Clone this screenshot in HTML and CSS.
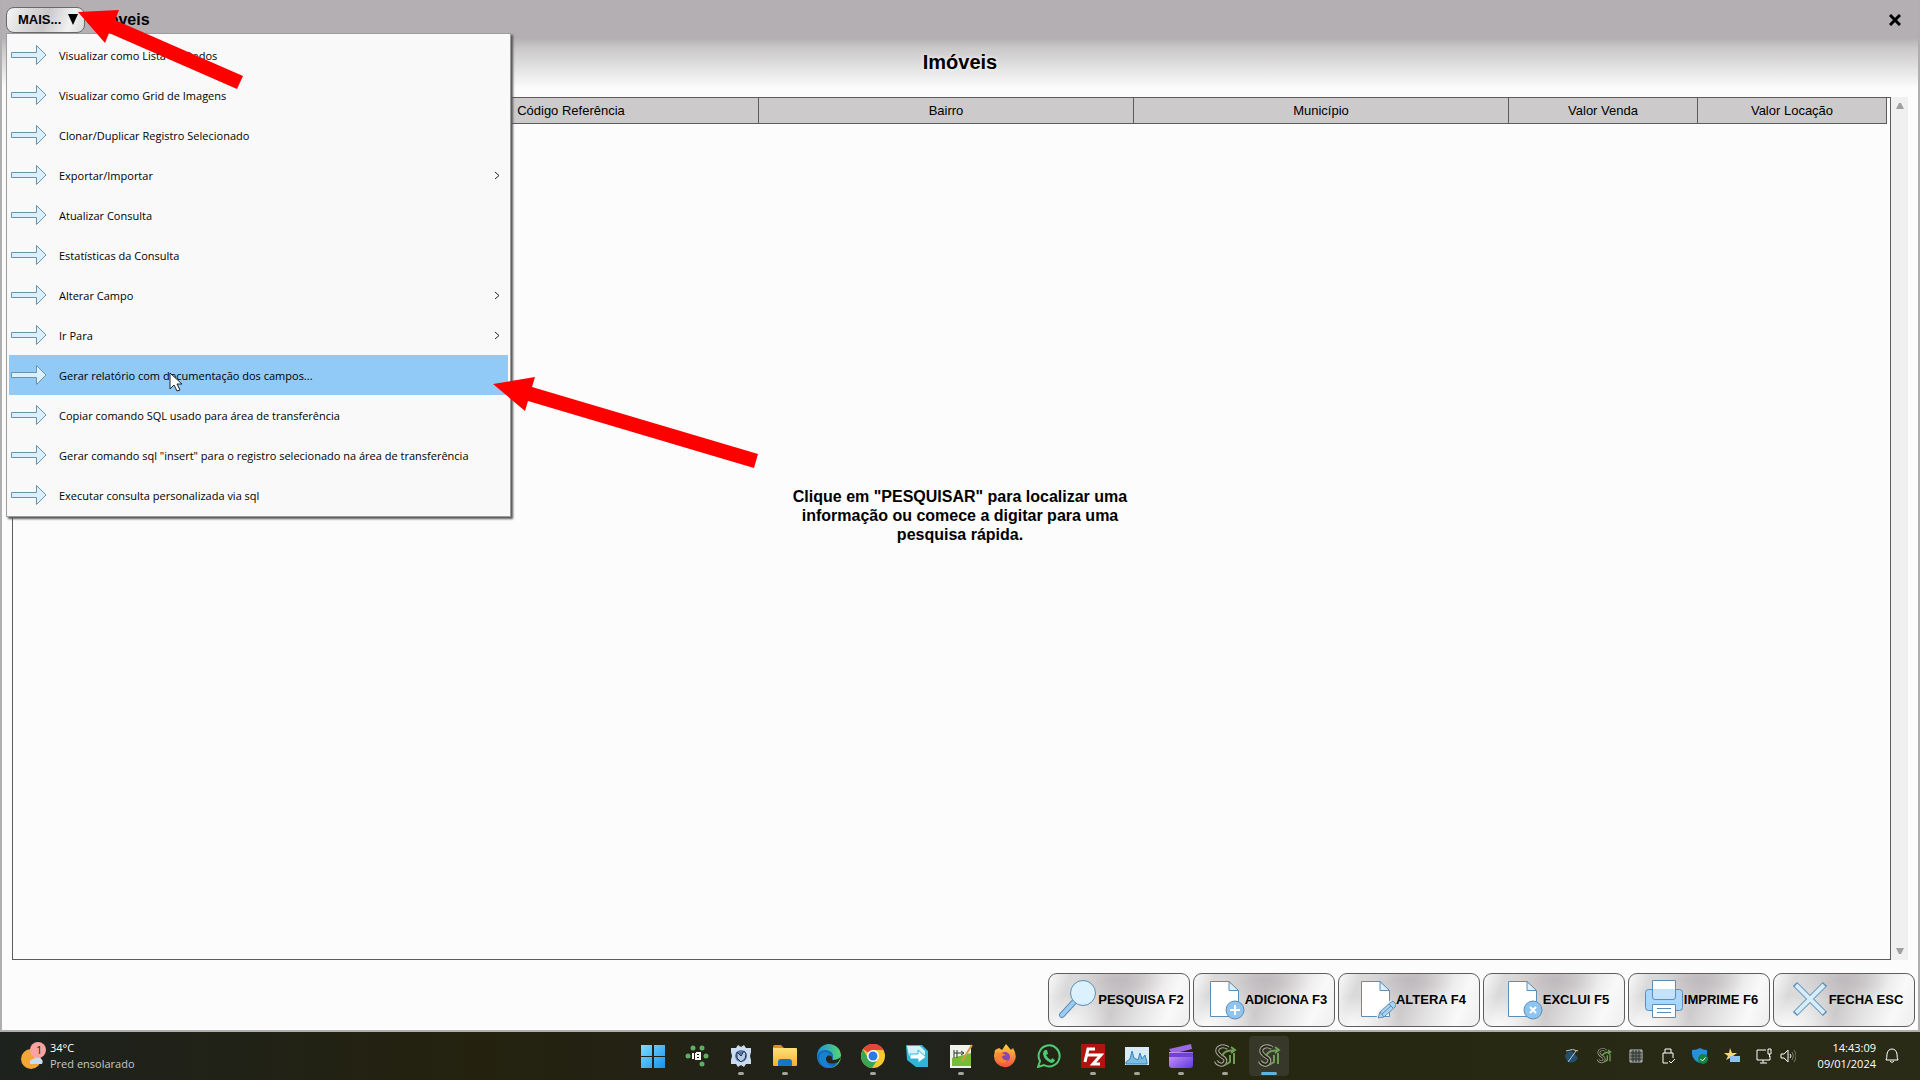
FILE: index.html
```html
<!DOCTYPE html>
<html lang="pt-BR">
<head>
<meta charset="utf-8">
<title>Imóveis</title>
<link rel="stylesheet" href="styles.css">
</head>
<body>
<svg class="defs" aria-hidden="true">
  <defs>
    <linearGradient id="win" x1="0" y1="0" x2="1" y2="1"><stop offset="0" stop-color="#7fdcff"/><stop offset="1" stop-color="#1890e8"/></linearGradient>
    <linearGradient id="fold" x1="0" y1="0" x2="0" y2="1"><stop offset="0" stop-color="#ffe07a"/><stop offset="1" stop-color="#eeb22c"/></linearGradient>
    <linearGradient id="edge" x1="0" y1="0" x2="1" y2="0"><stop offset="0" stop-color="#1b8fe0"/><stop offset="1" stop-color="#58d66f"/></linearGradient>
    <linearGradient id="fire" x1="0" y1="0" x2="0" y2="1"><stop offset="0" stop-color="#ffd23e"/><stop offset="1" stop-color="#f5503c"/></linearGradient>
    <linearGradient id="clip" x1="0" y1="0" x2="1" y2="1"><stop offset="0" stop-color="#d79cf5"/><stop offset="1" stop-color="#5b3be0"/></linearGradient>
    <symbol id="arrow" viewBox="0 0 38 22"><path d="M1.500 8.500H26.500V1.500L36 11L26.500 20.500V13.500H1.500Z" fill="#dbf0fd" stroke="#6a93ab"/></symbol>
    <symbol id="page" viewBox="0 0 48 48"><path d="M13.500 6.500H32L41.500 16V41.500H13.500Z" fill="#fff" stroke="#5b8db5"/><path d="M32 6.500V15.500H41.500Z" fill="#dbeffc" stroke="#5b8db5"/></symbol>
    <symbol id="sg" viewBox="0 0 24 24"><path d="M15 4C9 0 2 4 5 9S14 13 12 18S4 20 3 17" fill="none" stroke="#a9aba3" stroke-width="4"/><path d="M15 4C9 0 2 4 5 9S14 13 12 18S4 20 3 17" fill="none" stroke="#25250f" stroke-width="2"/><path d="M9 12C12 6 15 7 21 6M18 3L22 6L18 9M21 9V20M17 11V18L12 21" fill="none" stroke="#6f9d58" stroke-width="2"/></symbol>
  </defs>
</svg>

<main class="window">
  <header class="titlebar">
    <div class="more">
      <button class="more-button" type="button" aria-haspopup="menu" aria-expanded="true">MAIS...
        <svg width="10" height="11" viewBox="0 0 10 11"><path d="M0 0H10L5 11Z"/></svg>
      </button>
      <ul class="menu" role="menu">
        <li><button type="button" role="menuitem"><svg class="go"><use href="#arrow"/></svg><span>Visualizar como Lista de Dados</span></button></li>
        <li><button type="button" role="menuitem"><svg class="go"><use href="#arrow"/></svg><span>Visualizar como Grid de Imagens</span></button></li>
        <li><button type="button" role="menuitem"><svg class="go"><use href="#arrow"/></svg><span>Clonar/Duplicar Registro Selecionado</span></button></li>
        <li><button type="button" role="menuitem" aria-haspopup="menu"><svg class="go"><use href="#arrow"/></svg><span>Exportar/Importar</span><svg class="chevron" viewBox="0 0 6 9"><path d="M1 1L5 4.500L1 8"/></svg></button></li>
        <li><button type="button" role="menuitem"><svg class="go"><use href="#arrow"/></svg><span>Atualizar Consulta</span></button></li>
        <li><button type="button" role="menuitem"><svg class="go"><use href="#arrow"/></svg><span>Estatísticas da Consulta</span></button></li>
        <li><button type="button" role="menuitem" aria-haspopup="menu"><svg class="go"><use href="#arrow"/></svg><span>Alterar Campo</span><svg class="chevron" viewBox="0 0 6 9"><path d="M1 1L5 4.500L1 8"/></svg></button></li>
        <li><button type="button" role="menuitem" aria-haspopup="menu"><svg class="go"><use href="#arrow"/></svg><span>Ir Para</span><svg class="chevron" viewBox="0 0 6 9"><path d="M1 1L5 4.500L1 8"/></svg></button></li>
        <li><button class="selected" type="button" role="menuitem"><svg class="go"><use href="#arrow"/></svg><span>Gerar relatório com documentação dos campos...</span></button></li>
        <li><button type="button" role="menuitem"><svg class="go"><use href="#arrow"/></svg><span>Copiar comando SQL usado para área de transferência</span></button></li>
        <li><button type="button" role="menuitem"><svg class="go"><use href="#arrow"/></svg><span>Gerar comando sql "insert" para o registro selecionado na área de transferência</span></button></li>
        <li><button type="button" role="menuitem"><svg class="go"><use href="#arrow"/></svg><span>Executar consulta personalizada via sql</span></button></li>
      </ul>
    </div>
    <span class="window-name">Imóveis</span>
    <button class="close" type="button" aria-label="Fechar"><svg width="12" height="12" viewBox="0 0 12 12"><path d="M1 1L11 11M11 1L1 11" stroke="#000" stroke-width="3"/></svg></button>
  </header>

  <h1 class="heading">Imóveis</h1>

  <section class="browser">
    <div class="grid">
      <table>
        <colgroup><col class="first"><col><col><col><col class="price"><col class="price"></colgroup>
        <thead><tr><th></th><th>Código Referência</th><th>Bairro</th><th>Município</th><th>Valor Venda</th><th>Valor Locação</th></tr></thead>
      </table>
    </div>
    <div class="scrollbar">
      <svg width="8" height="6" viewBox="0 0 8 6"><path d="M0 6L3 0H5L8 6Z"/></svg>
      <svg width="8" height="6" viewBox="0 0 8 6"><path d="M0 0H8L5 6H3Z"/></svg>
    </div>
    <p class="hint">Clique em "PESQUISAR" para localizar uma informação ou comece a digitar para uma pesquisa rápida.</p>
  </section>

  <footer class="actions">
    <button type="button"><svg viewBox="0 0 48 48"><path d="M24 27L12 40" stroke="#5b8db5" stroke-width="6" stroke-linecap="round"/><path d="M24 27L12 40" stroke="#9dccf3" stroke-width="4" stroke-linecap="round"/><circle cx="33" cy="18" r="12.500" fill="#dcf1fe" stroke="#5b8db5"/></svg>PESQUISA F2</button>
    <button type="button"><svg viewBox="0 0 48 48"><use href="#page"/><circle cx="38" cy="35" r="9" fill="#8fc4ef" stroke="#5b8db5"/><path d="M38 30V40M33 35H43" stroke="#fff" stroke-width="2"/></svg>ADICIONA F3</button>
    <button type="button"><svg viewBox="0 0 48 48"><use href="#page"/><path d="M28 45L30 36L43 25L48 30L36 42Z" fill="#f4f2f3"/><path d="M30 43L32 37L43 27Q45 25 47 28Q49 30 47 32L36 42Z" fill="#a9d3f5" stroke="#5b8db5"/><path d="M32 37L36 42M41 29L45 33M34 39L43 31" stroke="#5b8db5"/></svg>ALTERA F4</button>
    <button type="button"><svg viewBox="0 0 48 48"><use href="#page"/><circle cx="38" cy="35" r="9" fill="#8fc4ef" stroke="#5b8db5"/><path d="M35 32L41 38M41 32L35 38" stroke="#fff" stroke-width="2"/></svg>EXCLUI F5</button>
    <button type="button"><svg viewBox="0 0 48 48"><rect x="9.500" y="14.500" width="37" height="21" rx="3" fill="#a9d6fa" stroke="#5b8db5"/><path d="M16.500 5.500H39.500V22Q39.500 24.500 37 24.500H19Q16.500 24.500 16.500 22Z" fill="#c4e3fb" stroke="#5b8db5"/><path d="M17 6H39V14H17Z" fill="#fff"/><path d="M16.500 29.500H39.500V42.500H16.500Z" fill="#fff" stroke="#5b8db5"/><path d="M21 33.500H35M21 37.500H35" stroke="#5b8db5"/></svg>IMPRIME F6</button>
    <button type="button"><svg viewBox="0 0 48 48"><path d="M14 9L44 39M44 9L14 39" stroke="#5b8db5" stroke-width="6"/><path d="M15 10L43 38M43 10L15 38" stroke="#d5edfd" stroke-width="4"/></svg>FECHA ESC</button>
  </footer>
</main>

<nav class="taskbar" aria-label="Barra de tarefas">
  <a class="weather" href="#">
    <svg width="26" height="28" viewBox="0 0 26 28"><circle cx="11" cy="17" r="10" fill="#f3a73a"/><path d="M10 22Q9 17 14 17Q16 12 20 16Q24 18 22 22Z" fill="#c9dcf3"/><circle cx="18" cy="8" r="8" fill="#f9a3a0"/><text x="16" y="12" class="badge">1</text></svg>
    <span>34°C<br><small>Pred ensolarado</small></span>
  </a>
  <div class="apps">
    <button type="button" aria-label="Iniciar"><svg viewBox="0 0 24 24"><path d="M0 1H11V12H0ZM13 1H24V12H13ZM0 13H11V24H0ZM13 13H24V24H13Z" fill="url(#win)"/></svg></button>
    <button type="button" aria-label="IBExpert"><svg viewBox="0 0 24 24"><g fill="#5fae63"><circle cx="8" cy="4" r="2.500"/><circle cx="17" cy="4" r="2.500"/><circle cx="3" cy="12" r="2.500"/><circle cx="21" cy="12" r="2.500"/><circle cx="17" cy="20" r="2.500"/></g><path d="M8 9V15M11 9V15H15V9H11M11 12H15" fill="none" stroke="#f5f5f5" stroke-width="2"/></svg></button>
    <button class="open" type="button" aria-label="Configurador"><svg viewBox="0 0 24 24"><path d="M9 1L12 3L15 1L17 4L22 4V8L21 12L22 16V20L17 20L15 23L12 21L9 23L7 20L2 20V16L3 12L2 8V4L7 4Z" fill="#cbdcf0"/><circle cx="12" cy="12" r="6" fill="#5a7aa5"/><path d="M8 8L12 12L15 7L17 10L16 15L12 18L8 14Z" fill="#b9cbe3" stroke="#1d3050"/></svg></button>
    <button class="open" type="button" aria-label="Explorador de Arquivos"><svg viewBox="0 0 24 24"><path d="M0 3Q0 1 2 1H8L11 4H22V9H0Z" fill="#d9921f"/><rect y="4" width="24" height="18" rx="1" fill="url(#fold)"/><path d="M5 22V18Q5 15 8 15H16Q19 15 19 18V22Z" fill="#1479c4"/></svg></button>
    <button type="button" aria-label="Edge"><svg viewBox="0 0 24 24"><circle cx="12" cy="12" r="12" fill="url(#edge)"/><path d="M0 12Q2 6 9 6Q17 7 16 14Q15 16 18 17L22 17Q18 24 11 24Q2 23 0 12Z" fill="#1668b8"/><path d="M12 11Q8 12 9 16Q12 22 21 18Q24 15 24 12Q22 16 15 16Q16 12 12 11Z" fill="#24251a"/><path d="M9 14Q8 21 16 22Q9 26 3 19Q0 9 8 8Q13 8 14 12Q10 10 9 14Z" fill="#1683d1"/></svg></button>
    <button class="open" type="button" aria-label="Chrome"><svg viewBox="0 0 24 24"><circle cx="12" cy="12" r="12" fill="#f7c92c"/><path d="M12 12L2 5A12 12 0 0 1 22.500 6H12Z" fill="#e5463a"/><path d="M2 5.500A12 12 0 0 0 11 24L17 15L12 12L7 14Z" fill="#38a555"/><circle cx="12" cy="12" r="6" fill="#fff"/><circle cx="12" cy="12" r="4.500" fill="#2f77e5"/></svg></button>
    <button type="button" aria-label="Conversor"><svg viewBox="0 0 24 24"><path d="M1 1H17L23 7V23H11L2 16Z" fill="#31b5d6"/><path d="M2 2H15L20 7V14H12L4 12Z" fill="#d5f2f8"/><path d="M5 10H13V6L21 13L13 19V15H5Z" fill="#fff" stroke="#31b5d6"/></svg></button>
    <button class="open" type="button" aria-label="Editor"><svg viewBox="0 0 24 24"><path d="M1 1H22V24H1Z" fill="#f0f3e9"/><path d="M3 14L22 9V22H3Z" fill="#78bc35"/><path d="M5 6V14M8 6V14M5 9H14M12 7L15 9L12 11" fill="none" stroke="#30382a"/><path d="M23 1L13 17" stroke="#d59c46" stroke-width="2"/></svg></button>
    <button type="button" aria-label="Firefox"><svg viewBox="0 0 24 24"><path d="M2 6L6 4L9 6L13 0L18 6L20 4Q25 12 21 18Q17 24 11 23Q1 21 1 12Z" fill="url(#fire)"/><circle cx="12" cy="13" r="5" fill="#8b45b7"/><path d="M3 9Q8 8 13 11L9 12Q9 17 15 16Q11 21 6 17Z" fill="#ff862d"/></svg></button>
    <button type="button" aria-label="WhatsApp"><svg viewBox="0 0 24 24"><path d="M1 23L3 17A10.500 10.500 0 1 1 7 21Z" fill="none" stroke="#4fca74" stroke-width="2"/><path d="M8 6L10 6L11 10L9 11Q11 15 14 16L15 14L18 16Q17 19 14 19Q7 16 6 10Q6 7 8 6Z" fill="#4fca74"/></svg></button>
    <button class="open" type="button" aria-label="FileZilla"><svg viewBox="0 0 24 24"><rect width="24" height="24" rx="1" fill="#b3130e"/><path d="M4 18L7 5H14M5 11H12M12 11H20L12 20H19" fill="none" stroke="#fff" stroke-width="3"/></svg></button>
    <button class="open" type="button" aria-label="Monitor"><svg viewBox="0 0 24 24"><rect y="3" width="24" height="18" fill="#d8ebf6"/><path d="M1 18L5 15L7 7L9 14L13 16L15 9L17 15L20 11L22 18V20H1Z" fill="#7fbce2" stroke="#3385c0"/></svg></button>
    <button class="open" type="button" aria-label="Clipchamp"><svg viewBox="0 0 24 24"><path d="M0 5L22 0L23 5L3 10Z" fill="#9b6ae3"/><path d="M0 8H24V21Q24 24 21 24H3Q0 24 0 21Z" fill="url(#clip)"/><path d="M0 9H24V13H0Z" fill="#7044d2"/></svg></button>
    <button class="open" type="button" aria-label="SG"><svg><use href="#sg"/></svg></button>
    <button class="open active" type="button" aria-label="SG, ativo"><svg><use href="#sg"/></svg></button>
  </div>
  <div class="tray">
    <svg viewBox="0 0 16 16"><path d="M1 9Q1 4 8 3L14 10Q10 16 4 14Z" fill="#24506f"/><path d="M2 3Q9 0 14 3M12 3L4 14" fill="none" stroke="#b9cbd6"/></svg>
    <svg><use href="#sg"/></svg>
    <svg viewBox="0 0 16 16"><path d="M2 2H14V14H2Z" fill="#737775" stroke="#bfc3c0"/><path d="M5 2V14M8 2V14M11 2V14M2 5H14M2 8H14M2 11H14" stroke="#31352f"/></svg>
    <svg viewBox="0 0 16 16"><path d="M5 5V1H11V5M8 15H3V5H13V10M9 13L11 15L15 11" fill="none" stroke="#fff"/></svg>
    <svg viewBox="0 0 16 16"><path d="M0 2Q5 2 8 0Q11 2 15 2Q16 12 8 15Q-1 12 0 2Z" fill="#288fdb"/><circle cx="11" cy="11" r="5" fill="#118445"/><path d="M8.500 11L10.500 13L13.500 9.500" fill="none" stroke="#fff"/></svg>
    <svg viewBox="0 0 16 16"><path d="M6 0L8 5L13 5L9 8L10 13L6 10L2 12L4 8L0 5H5Z" fill="#f5d475"/><rect x="6" y="8" width="10" height="6" fill="#8bc4ec"/></svg>
    <svg viewBox="0 0 16 16"><path d="M10 2H1V12H14V8M4 15H11M7 12V15M12 1H15V6H12ZM13.500 6V9" fill="none" stroke="#fff"/></svg>
    <svg class="sound" viewBox="0 0 16 16"><path d="M1 6H4L8 2V14L4 10H1Z" fill="none" stroke="#fff"/><path d="M10 6Q12 8 10 10" fill="none" stroke="#fff"/><path d="M12 4Q15 8 12 12M14 2Q18 8 14 14" fill="none" stroke="#77776b"/></svg>
    <time class="clock" datetime="2024-01-09T14:43:09">14:43:09<br>09/01/2024</time>
    <svg class="bell" viewBox="0 0 16 16"><path d="M2 12Q3 10 3 6Q4 1 8 1Q12 1 13 6Q13 10 14 12ZM6 13Q8 16 10 13" fill="none" stroke="#fff"/></svg>
  </div>
</nav>

<svg class="annotations" width="760" height="470" viewBox="0 0 760 470" aria-hidden="true">
  <path d="M170 373V389L174 385L177 391L180 390L177 384H182Z" fill="#fff" stroke="#222"/>
  <path d="M78 12L119 10L115 20L243 76L237 89L109 33L105 43Z" fill="#f00"/>
  <path d="M493 384L535 377L532 387L758 454L754 468L528 401L525 411Z" fill="#f00"/>
</svg>
</body>
</html>
```

FILE: styles.css
```css
* { box-sizing: border-box; }

body {
  margin: 0;
  min-height: 100vh;
  display: flex;
  flex-direction: column;
  font-family: "Liberation Sans", Arial, sans-serif;
  color: #000;
}

button { font: inherit; color: inherit; margin: 0; }

.defs { position: absolute; width: 0; height: 0; }

/* Application window */
.window {
  flex: 1;
  display: flex;
  flex-direction: column;
  border: solid #b0aeae;
  border-width: 0 2px 2px;
  background: linear-gradient(#b4afb3 0, #b4afb3 38px, #cac8c9 48px, #fcfcfc 88px);
}

.titlebar {
  display: flex;
  align-items: center;
  gap: 5px;
  height: 38px;
  padding: 2px 17px 0 4px;
}

.more { position: relative; }

.more-button {
  display: flex;
  align-items: center;
  justify-content: space-between;
  width: 79px;
  height: 26px;
  padding: 0 6px 2px 11px;
  border: 1px solid #6b686a;
  border-radius: 8px;
  font-size: 13px;
  font-weight: bold;
  background: linear-gradient(110deg, #f6f6f6 0, #dddcdc 25%, #cbc8c9 50%, #f2f2f2 80%, #d8d7d7 100%);
}

.menu {
  position: absolute;
  z-index: 1;
  top: 26px;
  left: 0;
  width: 505px;
  margin: 0;
  padding: 1px 2px;
  list-style: none;
  background: #f9f9f9;
  border: 1px solid #9c9c9c;
  box-shadow: 2px 2px 2px #555;
  font-family: "Open Sans", "Noto Sans", sans-serif;
  font-size: 11px;
}

.menu button {
  display: flex;
  align-items: center;
  gap: 11px;
  width: 100%;
  height: 40px;
  padding: 0 8px 0 1px;
  border: 0;
  background: none;
  text-align: left;
}

.menu .selected { background: #91c9f7; }
.menu span { flex: 1; white-space: nowrap; }
.go { flex: none; width: 38px; height: 22px; }
.chevron { width: 6px; height: 9px; fill: none; stroke: #222; }

.window-name { flex: 1; font-size: 16px; font-weight: bold; }

.close { display: flex; padding: 0; border: 0; background: none; }

.heading {
  margin: 0 0 11px;
  font-size: 20px;
  line-height: 48px;
  text-align: center;
  text-shadow: 0 0 4px #fff;
}

/* Record browser */
.browser {
  position: relative;
  flex: 1;
  display: flex;
  margin: 0 10px;
}

.grid {
  flex: 1;
  padding-right: 3px;
  border: 1px solid #5c5c5c;
  background: #fcfcfc;
}

table {
  width: 100%;
  table-layout: fixed;
  border-collapse: separate;
  border-spacing: 0;
}

.first { width: 371px; }
.price { width: 189px; }

th {
  height: 26px;
  padding: 0;
  border: solid #5c5c5c;
  border-width: 0 1px 1px 0;
  background: #cccacb;
  font-size: 13px;
  font-weight: normal;
}

.scrollbar {
  display: flex;
  flex-direction: column;
  justify-content: space-between;
  align-items: center;
  width: 17px;
  padding: 6px 0;
  background: #f0f0f0;
  fill: #a0a0a0;
}

.hint {
  position: absolute;
  inset: -26px 0 0;
  width: 350px;
  height: 58px;
  margin: auto;
  font-size: 16px;
  line-height: 19px;
  font-weight: bold;
  text-align: center;
}

.actions {
  display: flex;
  justify-content: flex-end;
  gap: 3px;
  padding: 13px 3px 3px;
}

.actions button {
  display: flex;
  align-items: center;
  justify-content: center;
  width: 142px;
  height: 54px;
  padding: 0 4px 2px 0;
  border: 1px solid #5f5c5e;
  border-radius: 9px;
  font-size: 13px;
  font-weight: bold;
  white-space: nowrap;
  background:
    radial-gradient(ellipse 45px 24px at 50% 12%, #bfbabd, transparent),
    radial-gradient(ellipse 50px 30px at 10% 100%, #fafafa, transparent),
    linear-gradient(112deg, #fafafa 0, #dad9d9 14%, #dedddd 30%, #cdcacb 48%, #e2e1e1 64%, #f9f9f9 84%, #eeeeee 100%);
}

.actions svg { flex: none; width: 48px; height: 48px; fill: none; }

/* Taskbar */
.taskbar {
  display: grid;
  grid-template-columns: 1fr auto 1fr;
  align-items: center;
  height: 48px;
  background: linear-gradient(90deg, #1e221e, #24220f 25%, #20221d 48%, #26270f 60%, #2a2b17);
  font-family: "Open Sans", "Noto Sans", sans-serif;
  font-size: 11px;
  line-height: 16px;
  color: #fff;
}

.weather {
  display: flex;
  align-items: center;
  gap: 4px;
  padding-left: 20px;
  color: inherit;
  text-decoration: none;
}

.weather small { font-size: 11px; color: #c6c8c5; }
.badge { font-size: 11px; fill: #222; }

.apps { display: flex; gap: 4px; padding-left: 2px; }

.apps button {
  position: relative;
  display: grid;
  place-items: center;
  width: 40px;
  height: 40px;
  padding: 0;
  border: 0;
  border-radius: 4px;
  background: none;
}

.apps svg { width: 24px; height: 24px; }

.open::after {
  content: "";
  position: absolute;
  bottom: 1px;
  left: 17px;
  width: 6px;
  height: 3px;
  border-radius: 2px;
  background: #a5a49b;
}

.apps .active { background: #37382a; }
.active::after { left: 12px; width: 16px; background: #5bb5e0; }

.tray {
  display: flex;
  align-items: center;
  justify-content: flex-end;
  gap: 16px;
  padding-right: 20px;
}

.tray svg { width: 16px; height: 16px; }
.tray .sound { margin-left: -8px; }
.clock { min-width: 64px; text-align: right; }
.tray .bell { margin-left: -8px; }

/* Pointer and callout arrows drawn over the desktop */
.annotations {
  position: absolute;
  z-index: 2;
  top: 0;
  left: 0;
  pointer-events: none;
}
```
